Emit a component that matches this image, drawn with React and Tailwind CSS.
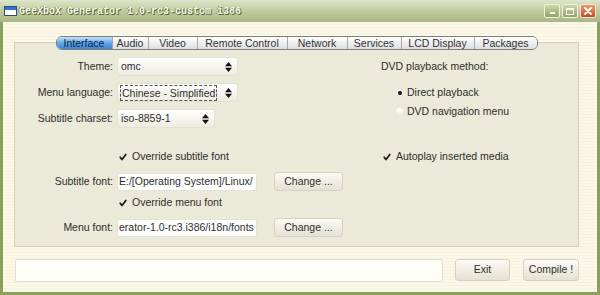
import React from "react";

const UpDown = () => (
  <svg width="7" height="10" viewBox="0 0 7 10" className="shrink-0">
    <polygon points="0,4.2 3.5,0 7,4.2" fill="#111" />
    <polygon points="0,5.8 3.5,10 7,5.8" fill="#111" />
  </svg>
);

const Check = () => (
  <svg width="12" height="12" viewBox="0 0 12 12" className="shrink-0">
    <path d="M3.2 6.2 L5 8.6 L8.8 3.4" fill="none" stroke="#1a1a1a" strokeWidth="1.7" strokeLinecap="round" strokeLinejoin="round" />
  </svg>
);

function Select({ className, children, focus }) {
  return (
    <div className={`flex items-center justify-between h-[19px] rounded-[3px] border border-[#e4e1d2] bg-linear-to-b from-[#ffffff] to-[#eeebdf] pl-[2px] pr-[5px] ${className}`}>
      {focus ? (
        <span className="border border-dashed border-[#555] px-[1px] leading-[14px] h-[16px]">{children}</span>
      ) : (
        <span className="pl-[1px]">{children}</span>
      )}
      <UpDown />
    </div>
  );
}

function Btn({ className, children }) {
  return (
    <div className={`flex items-center justify-center rounded-[3px] border border-[#d6d2c2] bg-linear-to-b from-[#fbfaf4] to-[#e4e1d4] ${className}`}>
      {children}
    </div>
  );
}

function CheckRow({ children }) {
  return (
    <div className="flex items-center h-[14px]">
      <Check />
      <span className="ml-[3px]">{children}</span>
    </div>
  );
}

function Radio({ checked, children }) {
  return (
    <div className="flex items-center h-[19px] pl-[14px]">
      <div className="w-[9px] h-[9px] rounded-full bg-linear-to-b from-[#ffffff] to-[#f0eee4] border border-[#ebe8da] flex items-center justify-center">
        {checked && <div className="w-[4px] h-[4px] rounded-full bg-[#111]" />}
      </div>
      <span className="ml-[3px]">{children}</span>
    </div>
  );
}

const tabs = [
  ["Interface", "w-[55px]"],
  ["Audio", "w-[36px]"],
  ["Video", "w-[49px]"],
  ["Remote Control", "w-[90px]"],
  ["Network", "w-[60px]"],
  ["Services", "w-[54px]"],
  ["LCD Display", "w-[73px]"],
  ["Packages", "w-[63px]"],
];

export default function App() {
  return (
    <div className="w-[600px] h-[295px] flex flex-col bg-[#8aa15c] font-['Liberation_Sans',Arial,sans-serif] text-[10.5px] text-[#2e2e2e] overflow-hidden">
      {/* Title bar */}
      <div className="h-[22px] shrink-0 flex items-center bg-linear-to-b from-[#dfe5c9] via-[#c0ca9f] to-[#aab685] pl-[4px] pr-[4px]">
        <div className="w-[13px] h-[10px] border border-[#2b4c8c] bg-white flex flex-col">
          <div className="h-[3px] bg-[#3a70c8]" />
        </div>
        <span className="ml-[2px] font-['Liberation_Mono',monospace] font-bold text-[10px] text-[#f6f8ee] [text-shadow:1px_1px_0_#58642f,-1px_0_0_#7c8a4c]">
          GeeXboX Generator 1.0-rc3-custom i386
        </span>
        <div className="ml-auto flex gap-[2px]">
          <div className="w-[16px] h-[14px] rounded-[2px] border border-[#eef2df] bg-linear-to-b from-[#ccd6a8] to-[#94a666] flex items-end justify-center pb-[3px]">
            <div className="w-[5px] h-[2px] bg-white" />
          </div>
          <div className="w-[16px] h-[14px] rounded-[2px] border border-[#eef2df] bg-linear-to-b from-[#ccd6a8] to-[#94a666] flex items-center justify-center">
            <div className="w-[8px] h-[7px] border border-white border-t-2" />
          </div>
          <div className="w-[16px] h-[14px] rounded-[2px] border border-[#f6e7d8] bg-linear-to-b from-[#eb9a6c] to-[#c8481f] flex items-center justify-center">
            <svg width="8" height="8" viewBox="0 0 8 8">
              <path d="M1 1 L7 7 M7 1 L1 7" stroke="#fff" strokeWidth="1.8" strokeLinecap="round" />
            </svg>
          </div>
        </div>
      </div>

      {/* Body */}
      <div className="flex-1 mx-[3px] mb-[3px] flex flex-col bg-[repeating-linear-gradient(180deg,#fbf8e8_0px,#fbf8e8_2px,#f6f2df_2px,#f6f2df_3px)] pt-[14px]">
        {/* Tabs */}
        <div className="relative z-10 h-[14px] flex justify-center ml-[11px] w-[565px]">
          <div className="flex h-[14px] rounded-[6px] border border-[#7d807a] overflow-hidden">
            {tabs.map(([t, w], i) => (
              <div
                key={t}
                className={`${w} flex items-center justify-center leading-none ${
                  i === 0
                    ? "bg-linear-to-b from-[#c4e2fb] via-[#62a6e8] to-[#3d86d6] text-[#0f2140]"
                    : "bg-linear-to-b from-[#ffffff] to-[#dedede] text-[#333] border-l border-[#a9a9a9]"
                }`}
              >
                {t}
              </div>
            ))}
          </div>
        </div>

        {/* Panel */}
        <div className="-mt-[8px] ml-[11px] w-[565px] h-[205px] border border-[#d2cfba] bg-[#ebe9d8] pt-[14px] flex flex-col">
          <div className="flex">
            <div className="w-[366px] flex flex-col gap-[7px]">
              <div className="flex items-center h-[19px]">
                <div className="w-[98px] text-right">Theme:</div>
                <Select className="ml-[4px] w-[121px]">omc</Select>
              </div>
              <div className="flex items-center h-[19px]">
                <div className="w-[98px] text-right">Menu language:</div>
                <Select className="ml-[4px] w-[121px]" focus>Chinese - Simplified</Select>
              </div>
              <div className="flex items-center h-[19px]">
                <div className="w-[98px] text-right">Subtitle charset:</div>
                <Select className="ml-[4px] w-[98px]">iso-8859-1</Select>
              </div>
            </div>
            <div className="flex flex-col">
              <div className="h-[19px] flex items-center">DVD playback method:</div>
              <div className="mt-[7px]">
                <Radio checked>Direct playback</Radio>
                <Radio>DVD navigation menu</Radio>
              </div>
            </div>
          </div>

          <div className="flex mt-[22px]">
            <div className="w-[366px] pl-[102px]">
              <CheckRow>Override subtitle font</CheckRow>
            </div>
            <div>
              <CheckRow>Autoplay inserted media</CheckRow>
            </div>
          </div>

          <div className="flex items-center mt-[8px] h-[19px]">
            <div className="w-[98px] text-right">Subtitle font:</div>
            <div className="ml-[4px] w-[140px] h-[18px] bg-white border border-[#e6e3d4] rounded-[2px] overflow-hidden whitespace-nowrap flex items-center pl-[1px]">
              E:/[Operating System]/Linux/
            </div>
            <Btn className="ml-[17px] w-[69px] h-[19px]">Change ...</Btn>
          </div>

          <div className="mt-[5px] pl-[102px]">
            <CheckRow>Override menu font</CheckRow>
          </div>

          <div className="flex items-center mt-[8px] h-[19px]">
            <div className="w-[98px] text-right">Menu font:</div>
            <div className="ml-[4px] w-[140px] h-[18px] bg-white border border-[#e6e3d4] rounded-[2px] overflow-hidden whitespace-nowrap flex items-center pl-[1px]">
              erator-1.0-rc3.i386/i18n/fonts
            </div>
            <Btn className="ml-[17px] w-[69px] h-[19px]">Change ...</Btn>
          </div>
        </div>

        {/* Bottom row */}
        <div className="flex items-start mt-[12px] ml-[12px]">
          <div className="w-[428px] h-[23px] bg-[#fefdf8] border border-[#e3e0cf] rounded-[2px]" />
          <Btn className="ml-[12px] w-[55px] h-[22px]">Exit</Btn>
          <Btn className="ml-[13px] w-[56px] h-[22px]">Compile !</Btn>
        </div>
      </div>
    </div>
  );
}
